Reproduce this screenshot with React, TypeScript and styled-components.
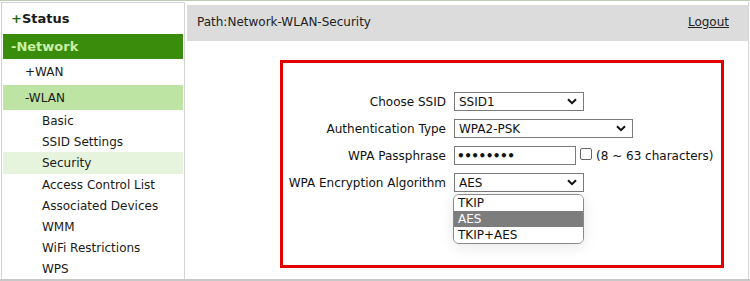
import React from "react";
import styled, { createGlobalStyle } from "styled-components";

const Global = createGlobalStyle`
  html, body { margin: 0; padding: 0; background: #fff; }
  body { font-family: "DejaVu Sans", Verdana, sans-serif; color: #111; }
`;

const Page = styled.div`
  width: 750px;
  height: 281px;
  box-sizing: border-box;
  border-top: 1px solid #b9cdb5;
  border-bottom: 2px solid #c8c8c8;
  display: flex;
  padding: 1px 1px 0 1px;
  gap: 2px;
  overflow: hidden;
`;

const Sidebar = styled.nav`
  width: 184px;
  box-sizing: border-box;
  border: 1px solid #d4d4d4;
  border-bottom: none;
  padding: 0 1px;
  display: flex;
  flex-direction: column;
`;

const Item = styled.div<{ $level: number; $bg?: string; $color?: string; $bold?: boolean; $h: number }>`
  height: ${(p) => p.$h}px;
  display: flex;
  align-items: center;
  padding-left: ${(p) => [8, 22, 39][p.$level]}px;
  background: ${(p) => p.$bg || "transparent"};
  color: ${(p) => p.$color || "#1a1a1a"};
  font-weight: ${(p) => (p.$bold ? 700 : 400)};
  font-size: ${(p) => (p.$bold ? 13 : 12)}px;
  white-space: nowrap;
`;

const Plus = styled.span`
  color: #1f6b12;
`;

const Main = styled.main`
  flex: 1;
  box-sizing: border-box;
  border-right: 1px solid #d4d4d4;
  display: flex;
  flex-direction: column;
  padding-top: 3px;
`;

const Header = styled.div`
  height: 36px;
  background: #dcdcdc;
  display: flex;
  justify-content: space-between;
  align-items: flex-start;
  padding: 10px 19px 0 10px;
  box-sizing: border-box;
  font-size: 12px;
  color: #222;
`;

const Logout = styled.a`
  color: #222;
  text-decoration: underline;
  cursor: pointer;
`;

const Box = styled.section`
  margin: 19px 24px 0 93px;
  height: 208px;
  box-sizing: border-box;
  border: 3px solid #e00000;
  padding-top: 29px;
  position: relative;
`;

const Form = styled.div`
  display: grid;
  grid-template-columns: 163px auto;
  column-gap: 8px;
  row-gap: 8px;
  align-items: center;
  font-size: 12px;
`;

const Label = styled.div`
  text-align: right;
  white-space: nowrap;
`;

const Control = styled.div`
  display: flex;
  align-items: center;
  gap: 4px;
  white-space: nowrap;
`;

const Select = styled.div<{ $w: number }>`
  width: ${(p) => p.$w}px;
  height: 19px;
  box-sizing: border-box;
  border: 1px solid #7a7a7a;
  display: flex;
  align-items: center;
  justify-content: space-between;
  padding: 0 6px 0 4px;
  font-size: 12px;
  background: #fff;
`;

const Input = styled.div`
  width: 122px;
  height: 19px;
  box-sizing: border-box;
  border: 1px solid #7a7a7a;
  display: flex;
  align-items: center;
  padding-left: 2px;
  font-size: 12px;
  font-weight: 700;
  letter-spacing: -0.5px;
`;

const Check = styled.span`
  width: 12px;
  height: 12px;
  box-sizing: border-box;
  border: 1px solid #666;
  border-radius: 2px;
  display: inline-block;
  margin-top: -4px;
`;

const List = styled.div`
  position: absolute;
  left: 170px;
  top: 131px;
  width: 131px;
  box-sizing: border-box;
  border: 1px solid #8a8a8a;
  border-radius: 6px;
  overflow: hidden;
  background: #fff;
  box-shadow: 0 3px 14px rgba(0, 0, 0, 0.1);
  font-size: 12px;
`;

const Option = styled.div<{ $sel?: boolean }>`
  height: 16px;
  line-height: 16px;
  padding-left: 4px;
  background: ${(p) => (p.$sel ? "#7d7d7d" : "#fff")};
  color: ${(p) => (p.$sel ? "#fff" : "#111")};
`;

const Chevron = () => (
  <svg width="10" height="7" viewBox="0 0 10 7">
    <path d="M1 1.2 L5 5.2 L9 1.2" fill="none" stroke="#111" strokeWidth="2" />
  </svg>
);

export default function App() {
  return (
    <>
      <Global />
      <Page>
        <Sidebar>
          <Item $level={0} $bold $h={31}>
            <Plus>+</Plus>Status
          </Item>
          <Item $level={0} $bold $h={25} $bg="#3a8c0c" $color="#c9efa6">
            -Network
          </Item>
          <Item $level={1} $h={26}>+WAN</Item>
          <Item $level={1} $h={25} $bg="#bde4a3">-WLAN</Item>
          <Item $level={2} $h={21}>Basic</Item>
          <Item $level={2} $h={21}>SSID Settings</Item>
          <Item $level={2} $h={22} $bg="#e6f4dd">Security</Item>
          <Item $level={2} $h={21}>Access Control List</Item>
          <Item $level={2} $h={21}>Associated Devices</Item>
          <Item $level={2} $h={21}>WMM</Item>
          <Item $level={2} $h={21}>WiFi Restrictions</Item>
          <Item $level={2} $h={21}>WPS</Item>
        </Sidebar>
        <Main>
          <Header>
            <span>Path:Network-WLAN-Security</span>
            <Logout>Logout</Logout>
          </Header>
          <Box>
            <Form>
              <Label>Choose SSID</Label>
              <Control>
                <Select $w={130}>SSID1<Chevron /></Select>
              </Control>
              <Label>Authentication Type</Label>
              <Control>
                <Select $w={179}>WPA2-PSK<Chevron /></Select>
              </Control>
              <Label>WPA Passphrase</Label>
              <Control>
                <Input>••••••••</Input>
                <Check />
                <span>(8 ~ 63 characters)</span>
              </Control>
              <Label>WPA Encryption Algorithm</Label>
              <Control>
                <Select $w={130}>AES<Chevron /></Select>
              </Control>
            </Form>
            <List>
              <Option>TKIP</Option>
              <Option $sel>AES</Option>
              <Option>TKIP+AES</Option>
            </List>
          </Box>
        </Main>
      </Page>
    </>
  );
}
